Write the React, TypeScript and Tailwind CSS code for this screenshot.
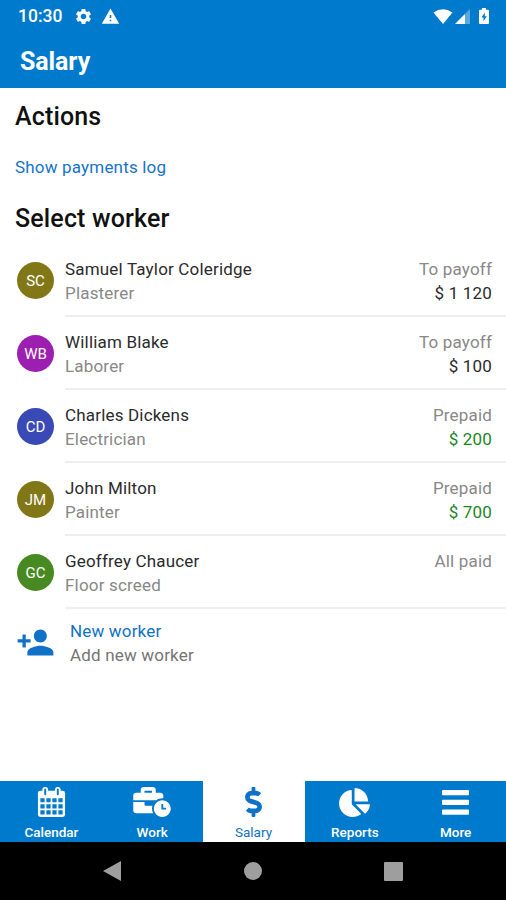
import type { ReactNode } from "react";
import { FaBusinessTime, FaChartPie, FaDollarSign } from "react-icons/fa";
import { MdPersonAdd, MdSettings, MdWarning } from "react-icons/md";

const workers = [
  { initials: "SC", name: "Samuel Taylor Coleridge", job: "Plasterer", status: "To payoff", amount: "$ 1 120", amountColor: "text-[#2b2b2b]", avatar: "bg-[#827717]" },
  { initials: "WB", name: "William Blake", job: "Laborer", status: "To payoff", amount: "$ 100", amountColor: "text-[#2b2b2b]", avatar: "bg-[#9c1fb1]" },
  { initials: "CD", name: "Charles Dickens", job: "Electrician", status: "Prepaid", amount: "$ 200", amountColor: "text-[#1b871f]", avatar: "bg-[#3949b5]" },
  { initials: "JM", name: "John Milton", job: "Painter", status: "Prepaid", amount: "$ 700", amountColor: "text-[#1b871f]", avatar: "bg-[#827717]" },
  { initials: "GC", name: "Geoffrey Chaucer", job: "Floor screed", status: "All paid", amount: "", amountColor: "", avatar: "bg-[#478a22]" },
];

function StatusBar() {
  return (
    <div className="flex h-8 items-center pl-[18px] pr-[17px]">
      <span className="text-[17.5px] font-medium leading-8">10:30</span>
      <MdSettings className="ml-[12px] h-[19px] w-[19px]" />
      <MdWarning className="ml-[8px] h-[19px] w-[19px]" />
      <svg className="ml-auto h-[15px] w-5" viewBox="0 0 20 15" fill="currentColor">
        <path d="M0.5 3.5Q10-3 19.5 3.5L10 15z" />
      </svg>
      <svg className="ml-[2px] h-[15px] w-[15px]" viewBox="0 0 15 15" fill="currentColor">
        <path d="M15 0v15H0z" opacity="0.35" />
        <path d="M10 5v10H0z" />
      </svg>
      <svg className="ml-[9px] h-4 w-[10px]" viewBox="0 0 10 16" fill="currentColor">
        <path fillRule="evenodd" d="M3 0h4v1.7h2q1 0 1 1V15q0 1-1 1H1q-1 0-1-1V2.7q0-1 1-1h2zM5.8 4.5L2.5 9.5h2v3.8L7.8 8.2H5.8z" />
      </svg>
    </div>
  );
}

function CalendarIcon() {
  return (
    <svg className="h-[30px] w-[29px]" viewBox="0 0 29 31">
      <rect x="0.5" y="4" width="28" height="27" rx="2.5" fill="#fff" />
      <rect x="5" y="0" width="6" height="10" rx="3" fill="#fff" />
      <rect x="18" y="0" width="6" height="10" rx="3" fill="#fff" />
      <path d="M8 2.5v5M21 2.5v5" stroke="#007acc" strokeWidth="2" strokeLinecap="round" />
      <path
        d="M3 13.7h23M3 20h23M3 26.2h23"
        stroke="#007acc"
        strokeWidth="4.3"
        strokeDasharray="4.4 1.8"
      />
    </svg>
  );
}

function MoreIcon() {
  return (
    <svg className="h-[25px] w-[27px]" viewBox="0 0 27 25" fill="currentColor">
      <rect width="27" height="5.3" rx="1" />
      <rect y="9.7" width="27" height="5.3" rx="1" />
      <rect y="19.4" width="27" height="5.3" rx="1" />
    </svg>
  );
}

function Tab({ label, active, children }: { label: string; active?: boolean; children: ReactNode }) {
  return (
    <div className={active ? "flex w-[102px] flex-col items-center bg-white pt-px text-[#0f72c7]" : "flex flex-1 flex-col items-center pt-px"}>
      <div className="flex h-[40px] items-center justify-center">{children}</div>
      <span className={active ? "text-[13.5px] leading-5" : "text-[13.5px] font-medium leading-5"}>{label}</span>
    </div>
  );
}

export default function App() {
  return (
    <div className="flex h-[900px] w-[506px] flex-col overflow-hidden bg-white font-['Roboto',sans-serif]">
      <header className="h-[88px] bg-[#007acc] text-white">
        <StatusBar />
        <h1 className="pl-5 pt-[15px] text-[25px] font-bold leading-[30px] tracking-[-0.1px]">Salary</h1>
      </header>

      <main className="flex-1 pt-[14px] text-[17px] tracking-[0.18px]">
        <h2 className="pl-[15px] text-[25px] font-medium leading-[30px] tracking-[0.15px] text-[#111111]">Actions</h2>
        <a className="mt-[23px] block pl-[15px] leading-6 text-[#1673c8]">Show payments log</a>
        <h2 className="mt-[25px] pl-[15px] text-[25px] font-medium leading-[30px] tracking-[0.15px] text-[#111111]">Select worker</h2>

        <ul className="mt-[10px]">
          {workers.map((worker) => (
            <li key={worker.name} className="flex h-[73px] pl-[17px]">
              <div className={`mt-[18px] flex h-[37px] w-[37px] items-center justify-center rounded-full pt-px text-[15px] tracking-normal text-white ${worker.avatar}`}>
                {worker.initials}
              </div>
              <div className="ml-[11px] flex flex-1 justify-between border-b-2 border-[#eeeeee] pr-[14px] pt-[13px] leading-6">
                <div>
                  <div className="text-[#2b2b2b]">{worker.name}</div>
                  <div className="text-[#888888]">{worker.job}</div>
                </div>
                <div className="text-right">
                  <div className="text-[#888888]">{worker.status}</div>
                  <div className={worker.amountColor}>{worker.amount}</div>
                </div>
              </div>
            </li>
          ))}
        </ul>

        <div className="flex pl-[16px] pt-[10px]">
          <MdPersonAdd className="mt-[4px] h-[39px] w-[39px] text-[#0f72c7]" />
          <div className="ml-[15px] leading-6">
            <div className="text-[#0f72c7]">New worker</div>
            <div className="text-[#757575]">Add new worker</div>
          </div>
        </div>
      </main>

      <nav className="flex h-[61px] bg-[#007acc] pl-px text-white">
        <Tab label="Calendar"><CalendarIcon /></Tab>
        <Tab label="Work"><FaBusinessTime className="h-[30px] w-[38px]" /></Tab>
        <Tab label="Salary" active><FaDollarSign className="h-[30px] w-[17px]" /></Tab>
        <Tab label="Reports"><FaChartPie className="h-[29px] w-[31px]" /></Tab>
        <Tab label="More"><MoreIcon /></Tab>
      </nav>

      <div className="flex h-[58px] items-center bg-black text-[#9e9e9e]">
        <svg className="ml-[102px] h-[22px] w-[20px]" viewBox="0 0 20 22" fill="currentColor">
          <path d="M1 11L19 1v20z" />
        </svg>
        <div className="ml-[122px] h-[18px] w-[18px] rounded-full bg-[#9e9e9e]" />
        <div className="ml-[122px] h-[19px] w-[19px] rounded-[1px] bg-[#9e9e9e]" />
      </div>
    </div>
  );
}
